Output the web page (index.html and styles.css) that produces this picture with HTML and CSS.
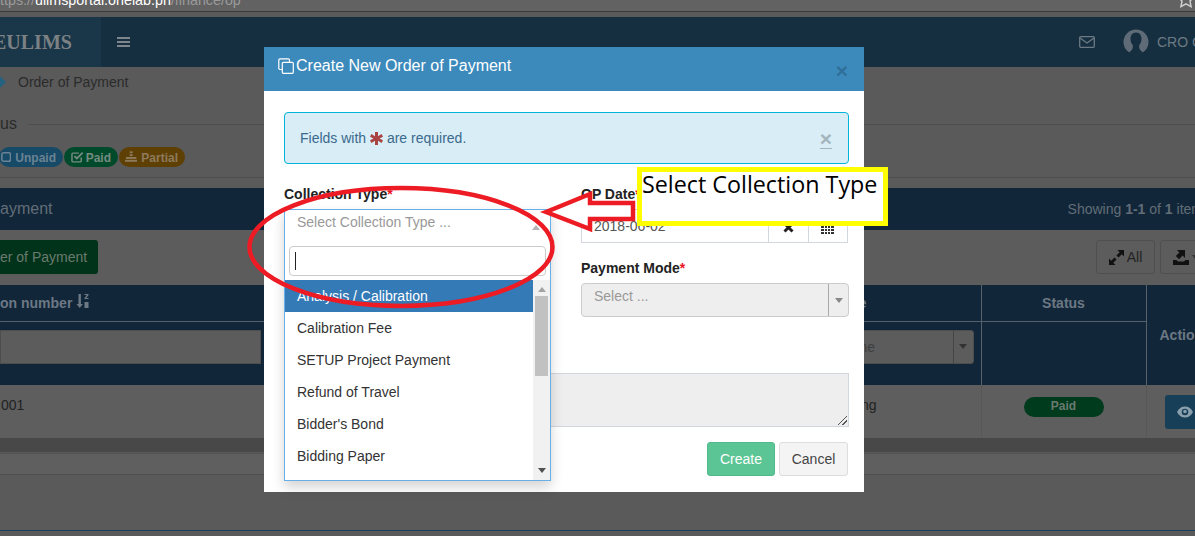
FILE: index.html
```html
<!DOCTYPE html>
<html lang="en">
<head>
    <meta charset="UTF-8">
    <title>Order of Payment</title>
    <link rel="stylesheet" href="styles.css">
</head>
<body>

<div class="browser-bar">
    <span class="url">ttps://<b>ulimsportal.onelab.ph</b>/finance/op</span>
    <svg class="bookmark" width="14" height="12" viewBox="0 5 14 12"><path d="M7 -4l2.600 5.200 5.400.8-4 4 1 5.600-5-2.700-5 2.700 1-5.600-4-4 5.400-.8z" fill="none" stroke="#cfcfcf" stroke-width="1.500"/></svg>
</div>

<header class="topnav">
    <div class="brand"><span>EULIMS</span></div>
    <div class="burger"><i></i><i></i><i></i></div>
    <div class="nav-right">
        <svg width="16" height="12" viewBox="0 0 16 12"><rect x=".7" y=".7" width="14.600" height="10.600" rx="1" fill="none" stroke="#6c7a83" stroke-width="1.300"/><path d="M1 2l7 5 7-5" fill="none" stroke="#6c7a83" stroke-width="1.300"/></svg>
        <svg class="avatar" width="26" height="26" viewBox="0 0 26 26"><circle cx="13" cy="13" r="12.500" fill="#5f6c78"/><path d="M13 3.500c-3.600 0-5.500 2.800-5.500 6.500 0 2.800 1 4.700 2.300 6v2.800C9.500 20.500 8 22 6 23.500c2 1.500 4.500 2.500 7 2.500s5-1 7-2.500c-2-1.500-3.500-3-3.800-4.700V16c1.300-1.300 2.300-3.200 2.300-6 0-3.700-1.900-6.500-5.500-6.500z" fill="#162f40"/></svg>
        <span class="user">CRO C</span>
    </div>
</header>

<main class="page">
    <div class="crumbs"><i class="diamond"></i><span>Order of Payment</span></div>

    <div class="legend">
        <div class="legend-title"><span>us</span><hr></div>
        <div class="badges">
            <span class="badge badge-unpaid">
                <svg width="12" height="12" viewBox="0 0 12 12"><rect x="1" y="1" width="10" height="10" rx="2" fill="none" stroke="#6a8394" stroke-width="1.800"/></svg>
                Unpaid
            </span>
            <span class="badge badge-paid">
                <svg width="13" height="12" viewBox="0 0 13 12"><path d="M10.500 6.500V10a1 1 0 0 1-1 1H2a1 1 0 0 1-1-1V3a1 1 0 0 1 1-1h6" fill="none" stroke="#768c80" stroke-width="1.500"/><path d="M3.500 5l2.500 2.500L12 1.500" fill="none" stroke="#768c80" stroke-width="1.800"/></svg>
                Paid
            </span>
            <span class="badge badge-partial">
                <svg width="13" height="12" viewBox="0 0 13 12" fill="#8d7a5c"><rect x="5" y="0" width="3" height="2"/><rect x="5" y="3" width="3" height="2"/><rect x="1" y="6" width="11" height="2"/><rect x="0" y="9" width="13" height="2"/></svg>
                Partial
            </span>
        </div>
    </div>

    <section class="panel">
        <div class="panel-head">
            <span>ayment</span>
            <span class="summary">Showing <b>1-1</b> of <b>1</b> item</span>
        </div>
        <div class="toolbar">
            <button class="btn-new">er of Payment</button>
            <div class="tools">
                <button class="btn-tool">
                    <svg width="15" height="15" viewBox="0 0 15 15" fill="#111"><path d="M15 0v6.500L12.800 4.300 9.500 7.600 7.400 5.500l3.300-3.300L8.500 0zM0 15V8.500l2.200 2.200 3.300-3.300 2.100 2.100-3.300 3.300L6.500 15z"/></svg>
                    All
                </button>
                <button class="btn-tool btn-export">
                    <svg width="16" height="15" viewBox="0 0 16 15" fill="#111"><path d="M0 10h3.500l1.500 1.500h6L12.500 10H16v5H0zM4 0h8v8l-2.400-2.400L6 9.200 2.800 6l3.600-3.600z"/></svg>
                    <i class="caret"></i>
                </button>
            </div>
        </div>
        <table class="grid">
            <colgroup><col class="c1"><col class="c2"><col class="c3"><col class="c4"><col class="c5"></colgroup>
            <thead>
                <tr>
                    <th class="left">on number
                        <svg width="13" height="14" viewBox="0 0 13 14" fill="#6c7884"><path d="M2.500 0h2.400v10h2L3.700 14 .5 10h2z"/><path d="M8.500 0h4v1.200L10.200 4h2.300v1h-4V3.900L10.800 1H8.500zM8.500 8h4v6h-4z"/></svg>
                    </th>
                    <th></th>
                    <th class="mode-head">e</th>
                    <th>Status</th>
                    <th rowspan="2" class="action">Actio</th>
                </tr>
                <tr class="filters">
                    <th class="left"><div class="filter-input"></div></th>
                    <th></th>
                    <th><div class="filter-select"><span>ne</span><b><i class="caret"></i></b></div></th>
                    <th></th>
                </tr>
            </thead>
            <tbody>
                <tr>
                    <td class="left">001</td>
                    <td></td>
                    <td class="mode">ng</td>
                    <td class="status-cell"><span class="pill">Paid</span></td>
                    <td class="action-cell">
                        <span class="btn-view"><svg width="16" height="12" viewBox="0 0 16 12"><path d="M0 6c2-3.800 4.800-5.500 8-5.500S14 2.200 16 6c-2 3.800-4.800 5.500-8 5.500S2 9.800 0 6z" fill="#8ba0ad"/><circle cx="8" cy="6" r="3.300" fill="#183f58"/><circle cx="8" cy="5.500" r="1.800" fill="#8ba0ad"/></svg></span>
                    </td>
                </tr>
            </tbody>
        </table>
        <div class="h-scroll"></div>
        <div class="panel-foot"></div>
    </section>
    <div class="page-end"></div>
</main>

<div class="modal">
    <div class="modal-head">
        <h4>
            <svg width="16" height="16" viewBox="0 0 16 16" fill="none" stroke="#fff" stroke-width="1.200"><path d="M4 11.500H2a1.200 1.200 0 0 1-1.200-1.200V2A1.200 1.200 0 0 1 2 .8h8.300A1.200 1.200 0 0 1 11.500 2v2"/><rect x="4.300" y="4.300" width="11" height="11" rx="1"/></svg>
            Create New Order of Payment
        </h4>
        <span class="modal-close">×</span>
    </div>
    <div class="modal-body">
        <div class="alert">
            <span>Fields with <svg class="star" width="13" height="13" viewBox="0 0 13 13" fill="#a94442"><path d="M5 0h3v4.200l3.600-2.100 1.400 2.600L9.500 6.500 13 8.300l-1.400 2.600L8 8.800V13H5V8.800l-3.600 2.100L0 8.300l3.500-1.800L0 4.700l1.400-2.600L5 4.200z"/></svg> are required.</span>
            <span class="alert-close">×</span>
        </div>
        <div class="form-grid">
            <div class="field">
                <label>Collection Type<em>*</em></label>
                <div class="select2-open">
                    <div class="select2-value">
                        <span>Select Collection Type ...</span>
                        <i class="caret caret-up"></i>
                    </div>
                    <div class="select2-search"><span class="cursor"></span></div>
                    <div class="select2-list">
                        <ul>
                            <li class="active">Analysis / Calibration</li>
                            <li>Calibration Fee</li>
                            <li>SETUP Project Payment</li>
                            <li>Refund of Travel</li>
                            <li>Bidder's Bond</li>
                            <li>Bidding Paper</li>
                        </ul>
                        <div class="scrollbar">
                            <i class="caret caret-up"></i>
                            <div class="thumb"></div>
                            <i class="caret"></i>
                        </div>
                    </div>
                </div>
            </div>
            <div class="field">
                <label>OP Date<em>*</em></label>
                <div class="date-group">
                    <span class="date-input">2018-06-02</span>
                    <span class="addon">
                        <svg width="11" height="11" viewBox="0 0 11 11" fill="none" stroke="#222" stroke-width="3"><path d="M1.500 1.500l8 8M9.500 1.500l-8 8"/></svg>
                    </span>
                    <span class="addon">
                        <svg width="13" height="12" viewBox="0 0 13 12" fill="#333"><path d="M0 0h13v3H0z"/><path d="M0 4h3v2H0zM4 4h2v2H4zM7 4h2v2H7zM10 4h3v2h-3zM0 7h3v2H0zM4 7h2v2H4zM7 7h2v2H7zM10 7h3v2h-3zM0 10h3v2H0zM4 10h2v2H4zM7 10h2v2H7zM10 10h3v2h-3z"/></svg>
                    </span>
                </div>
                <label class="second">Payment Mode<em>*</em></label>
                <div class="select-disabled">
                    <span>Select ...</span>
                    <b><i class="caret"></i></b>
                </div>
            </div>
        </div>
        <div class="details"><span class="resize"></span></div>
        <div class="modal-actions">
            <button class="btn-create">Create</button>
            <button class="btn-cancel">Cancel</button>
        </div>
    </div>
</div>

<!-- annotations drawn over the screenshot -->
<svg class="marks" width="1195" height="536" viewBox="0 0 1195 536">
    <ellipse cx="401" cy="247" rx="151.500" ry="59" fill="none" stroke="#ed1c24" stroke-width="4.500"/>
    <path d="M546 212L590 194V203H633V219H590V229Z" fill="#fff" stroke="#ed1c24" stroke-width="4.500"/>
</svg>
<div class="callout">Select Collection Type</div>

</body>
</html>
```

FILE: styles.css
```css
* {
    box-sizing: border-box;
}

html, body {
    margin: 0;
    height: 536px;
    overflow: hidden;
}

body {
    font-family: "Liberation Sans", Arial, sans-serif;
    font-size: 14px;
    background: #5a5a5a;
    color: #2b2b2b;
    position: relative;
}

/* browser chrome */
.browser-bar {
    height: 12px;
    background: #626262;
    border-bottom: 1px solid #3b3b3b;
    overflow: hidden;
    position: relative;
}

.url {
    display: block;
    margin-top: -10px;
    font-size: 14.300px;
    line-height: 20px;
    color: #9a9a9a;
}

.url b {
    font-weight: normal;
    color: #fff;
}

.bookmark {
    position: absolute;
    right: 2px;
    top: 0;
}

/* top nav */
.topnav {
    height: 50px;
    margin-top: 5px;
    background: #162f40;
    display: flex;
    align-items: center;
}

.brand {
    width: 101px;
    height: 50px;
    background: #1a3649;
    overflow: hidden;
    display: flex;
    align-items: center;
}

.brand span {
    margin-left: -7px;
    font-family: "Liberation Serif", serif;
    font-weight: bold;
    font-size: 20px;
    color: #7c8184;
}

.burger {
    margin-left: 16px;
    width: 13px;
    display: flex;
    flex-direction: column;
    gap: 2px;
}

.burger i {
    height: 2px;
    background: #7c868c;
}

.nav-right {
    margin-left: auto;
    display: flex;
    align-items: center;
    gap: 28px;
    color: #6c7a83;
    font-size: 14px;
}

.avatar {
    margin-right: -20px;
}

.user {
    white-space: nowrap;
    width: 38px;
    overflow: hidden;
}

/* page */
.crumbs {
    height: 30px;
    display: flex;
    align-items: center;
    color: #2b2b2b;
}

.diamond {
    width: 10px;
    height: 10px;
    margin-left: -6px;
    margin-right: 14px;
    background: #25627f;
    transform: rotate(45deg);
}

.legend {
    padding-top: 18px;
    height: 81px;
}

.legend-title {
    display: flex;
    align-items: center;
    font-size: 16px;
    height: 18px;
}

.legend-title hr {
    flex: 1;
    margin: 0 0 0 11px;
    border: 0;
    border-top: 1px solid #4d4d4d;
}

.badges {
    margin-top: 14px;
    padding-bottom: 10px;
    border-bottom: 1px solid #4d4d4d;
    display: flex;
    gap: 1px;
}

.badge {
    height: 20px;
    border-radius: 10px;
    padding: 1px 7px 0;
    display: inline-flex;
    align-items: center;
    gap: 4px;
    font-size: 12px;
    font-weight: bold;
}

.badge svg {
    margin-top: -1px;
}

.badge-unpaid {
    width: 64px;
    margin-left: -1px;
    padding-left: 2px;
    background: #174a66;
    color: #6a8394;
}

.badge-paid {
    width: 54px;
    padding-left: 7px;
    gap: 2px;
    background: #004a2c;
    color: #768c80;
}

.badge-partial {
    width: 66px;
    padding-left: 6px;
    background: #5f4004;
    color: #8d7a5c;
}

.panel {
    margin-top: 10px;
}

.panel-head {
    height: 42px;
    background: #112639;
    color: #626d76;
    font-size: 16px;
    display: flex;
    align-items: center;
    justify-content: space-between;
}

.summary {
    font-size: 14px;
    white-space: nowrap;
    margin-right: -8px;
}

.toolbar {
    height: 55px;
    padding-top: 10px;
    display: flex;
    justify-content: space-between;
    background: #5c5c5c;
}

.btn-new {
    width: 98px;
    height: 34px;
    border: 0;
    border-radius: 0 3px 3px 0;
    background: #003319;
    color: #6b7a6f;
    font: 14px "Liberation Sans", Arial, sans-serif;
    text-align: right;
    white-space: nowrap;
    padding: 0 13px 0 0;
}

.tools {
    display: flex;
    gap: 5px;
    margin-right: -35px;
}

.btn-tool {
    height: 34px;
    width: 59px;
    background: #5c5c5c;
    border: 1px solid #4f4f4f;
    border-radius: 3px;
    color: #222;
    font: 14px "Liberation Sans", Arial, sans-serif;
    display: flex;
    align-items: center;
    justify-content: center;
    gap: 3px;
}

.btn-export {
    width: 70px;
    justify-content: flex-start;
    padding-left: 12px;
}

.caret {
    display: inline-block;
    width: 0;
    height: 0;
    border: 4px solid transparent;
    border-top: 5px solid #333;
    border-bottom: 0;
}

.caret-up {
    border-top: 0;
    border-bottom: 5px solid #b5b5b5;
}

/* table */
.grid {
    width: 1230px;
    border-collapse: collapse;
    table-layout: fixed;
}

.c1 { width: 271px; }
.c2 { width: 430px; }
.c3 { width: 280px; }
.c4 { width: 165px; }
.c5 { width: 84px; }

.grid th {
    background: #112639;
    color: #6c7884;
    font-size: 14px;
    text-align: center;
    border: 1px solid #55606b;
    border-top: 0;
    padding: 0;
    height: 36px;
}

.grid th.left {
    text-align: left;
    border-left: 0;
}

.grid th.mode-head {
    text-align: right;
    padding-right: 114px;
}

.filters th {
    height: 64px;
    border-bottom: 0;
    vertical-align: top;
}

.grid th.action {
    border-bottom: 0;
    text-align: left;
    padding-left: 13px;
}

.filter-input {
    height: 34px;
    width: 261px;
    margin-top: 8px;
    background: #5c5c5c;
    border: 1px solid #4d4d4d;
}

.filter-select {
    height: 34px;
    width: 120px;
    margin: 8px 0 0 152px;
    padding-left: 5px;
    background: #5c5c5c;
    border-radius: 3px;
    border: 1px solid #4d4d4d;
    display: flex;
    align-items: center;
    justify-content: space-between;
    color: #3e3e3e;
    font-weight: normal;
}

.filter-select b {
    width: 20px;
    height: 32px;
    border-left: 1px solid #454545;
    display: flex;
    align-items: center;
    justify-content: center;
}

.grid td {
    height: 53px;
    vertical-align: top;
    padding-top: 12px;
    background: #5e5e5e;
    border-right: 1px solid #575757;
    color: #222;
}

.grid td.mode {
    text-align: right;
    padding-right: 104px;
}

.status-cell {
    text-align: center;
}

.pill {
    display: inline-block;
    width: 80px;
    height: 20px;
    line-height: 18px;
    border-radius: 10px;
    background: #003b1e;
    color: #6a7a70;
    font-size: 12px;
    font-weight: bold;
}

.grid .action-cell {
    padding: 10px 0 0 18px;
}

.btn-view {
    display: flex;
    align-items: center;
    justify-content: center;
    width: 40px;
    height: 34px;
    background: #183f58;
    border-radius: 3px;
}

.h-scroll {
    height: 14px;
    background: #484848;
}

.panel-foot {
    height: 22px;
    margin-top: 1px;
    background: #5f5f5f;
    border-top: 1px solid #535353;
    border-bottom: 1px solid #4f4f4f;
}

.page-end {
    margin-top: 55px;
    border-top: 1px solid #1b3f5c;
    height: 6px;
}

/* modal */
.modal {
    position: absolute;
    left: 264px;
    top: 47px;
    width: 600px;
    height: 445px;
    background: #fff;
}

.modal-head {
    height: 44px;
    background: #3c8abb;
    position: relative;
    padding: 10px 0 0 14px;
}

.modal-head h4 {
    margin: 0;
    color: #fff;
    font-size: 16px;
    font-weight: normal;
    display: flex;
    align-items: center;
    gap: 2px;
    line-height: 18px;
}

.modal-close {
    position: absolute;
    right: 16px;
    top: 13px;
    font-size: 21px;
    font-weight: bold;
    line-height: 21px;
    color: #2f6f99;
}

.modal-body {
    padding: 21px 15px 0 20px;
}

.alert {
    height: 52px;
    background: #d9edf7;
    border: 1px solid #00b5d8;
    border-radius: 4px;
    padding: 0 15px;
    display: flex;
    align-items: center;
    justify-content: space-between;
    color: #3a6a8c;
}

.star {
    vertical-align: -2px;
}

.alert-close {
    font-size: 21px;
    font-weight: bold;
    color: #a3b4bd;
    border-bottom: 1px solid #a3b4bd;
    line-height: 19px;
    margin: 1px 1px 0 0;
}

.form-grid {
    margin-top: 22px;
    display: grid;
    grid-template-columns: 267px 268px;
    column-gap: 30px;
    height: 164px;
}

.field {
    position: relative;
    min-width: 0;
}

.field label {
    display: block;
    height: 23px;
    font-weight: bold;
    line-height: 16px;
    color: #222;
}

.field label.second {
    margin-top: 25px;
    height: 15px;
    line-height: 0;
}

.field em {
    font-style: normal;
    color: #e81123;
}

/* the open select spills past the form, so it lies over the notes box */
.select2-open {
    position: absolute;
    left: 0;
    top: 23px;
    width: 267px;
    height: 272px;
    background: #fff;
    border: 1px solid #66afe9;
    box-shadow: 0 6px 12px rgba(0, 0, 0, .175);
    z-index: 2;
}

.select2-value {
    height: 25px;
    padding: 4px 12px;
    color: #999;
    display: flex;
    justify-content: space-between;
    align-items: flex-start;
    margin-bottom: 11px;
}

.select2-value .caret {
    margin-top: 11px;
    margin-right: -2px;
}

.select2-search {
    height: 30px;
    margin: 0 4px;
    border: 1px solid #ccc;
    border-radius: 4px;
    padding: 5px;
}

.cursor {
    display: block;
    width: 1px;
    height: 18px;
    background: #222;
}

.select2-list {
    margin-top: 4px;
    display: flex;
    height: 200px;
}

.select2-list ul {
    flex: 1;
    margin: 0;
    padding: 0;
    list-style: none;
    color: #333;
}

.select2-list li {
    height: 32px;
    line-height: 32px;
    padding-left: 12px;
}

.select2-list li.active {
    background: #337ab7;
    color: #fff;
}

.scrollbar {
    width: 17px;
    background: #f1f1f1;
    display: flex;
    flex-direction: column;
    align-items: center;
    padding: 7px 0;
}

.thumb {
    width: 13px;
    height: 80px;
    margin: 4px 0 auto;
    background: #c1c1c1;
}

.scrollbar .caret {
    border-top-color: #505050;
}

.scrollbar .caret-up {
    border-bottom-color: #a3a3a3;
}

.date-group {
    display: flex;
    width: 267px;
    height: 34px;
    border: 1px solid #d2d6de;
}

.date-input {
    flex: 1;
    padding: 8px 12px;
    color: #555;
    line-height: 16px;
}

.addon {
    width: 39.500px;
    display: flex;
    align-items: center;
    justify-content: center;
    border-left: 1px solid #d2d6de;
    padding-top: 3px;
}

.select-disabled {
    height: 34px;
    width: 268px;
    background: #eee;
    border: 1px solid #ccc;
    border-radius: 4px;
    padding-left: 12px;
    display: flex;
    justify-content: space-between;
    color: #999;
    line-height: 24px;
}

.select-disabled b {
    width: 20px;
    border-left: 1px solid #aaa;
    display: flex;
    align-items: center;
    justify-content: center;
}

.select-disabled .caret {
    border-top-color: #888;
}

.details {
    height: 54px;
    margin-top: 23px;
    background: #eee;
    border: 1px solid #d2d6de;
    position: relative;
}

.resize {
    position: absolute;
    right: 1px;
    bottom: 1px;
    width: 9px;
    height: 9px;
    background: linear-gradient(135deg, transparent 45%, #555 45%, #555 53%, transparent 53%, transparent 70%, #555 70%, #555 78%, transparent 78%);
}

.modal-actions {
    margin-top: 15px;
    display: flex;
    justify-content: flex-end;
    gap: 4px;
    padding-right: 1px;
}

.modal-actions button {
    height: 34px;
    border-radius: 3px;
    font: 14px "Liberation Sans", Arial, sans-serif;
}

.btn-create {
    width: 68px;
    background: #5cc595;
    border: 1px solid #52b98a;
    color: #fff;
}

.btn-cancel {
    width: 69px;
    background: #f4f4f4;
    border: 1px solid #ddd;
    color: #444;
}

/* annotations */
.marks {
    position: absolute;
    left: 0;
    top: 0;
    z-index: 5;
    pointer-events: none;
}

.callout {
    position: absolute;
    left: 637px;
    top: 167px;
    z-index: 6;
    width: 251px;
    height: 59px;
    background: #fff;
    border: 5px solid #ffff00;
    font-family: "Open Sans", sans-serif;
    font-size: 23.300px;
    line-height: 25px;
    color: #000;
    white-space: nowrap;
}
```
